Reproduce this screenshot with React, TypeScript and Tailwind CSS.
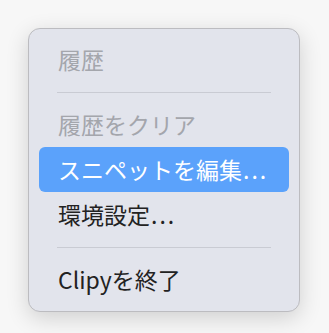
const font = { fontFamily: '"Noto Sans CJK JP", "Noto Sans", sans-serif' };

function Separator() {
  return (
    <div className="h-5 flex items-center px-7">
      <div className="h-px w-full bg-[#c9cbd3]" />
    </div>
  );
}

function Item({ label, dots, disabled, active }: { label: string; dots?: boolean; disabled?: boolean; active?: boolean }) {
  return (
    <div
      className={`h-[45px] mx-[10px] px-[19px] flex items-center whitespace-nowrap rounded-[6px] text-[23px] leading-none ${
        active ? "bg-[#5ba2fb] text-white" : disabled ? "text-[#a4a6ac]" : "text-[#222222]"
      }`}
    >
      <span>{label}</span>
      {dots && <span className="tracking-[2px] ml-[1px]">...</span>}
    </div>
  );
}

export default function App() {
  return (
    <div className="w-[329px] h-[333px] bg-[#f7f7f7] pt-[28px] pl-[28px]" style={font}>
      <div className="w-[272px] h-[284px] pt-[8px] rounded-[12px] bg-[#e2e4ec] border border-[#bcbcc0] shadow-[0_6px_22px_rgba(0,0,0,0.16)]">
        <Item label="履歴" disabled />
        <Separator />
        <Item label="履歴をクリア" disabled />
        <Item label="スニペットを編集" dots active />
        <Item label="環境設定" dots />
        <Separator />
        <Item label="Clipyを終了" />
      </div>
    </div>
  );
}
